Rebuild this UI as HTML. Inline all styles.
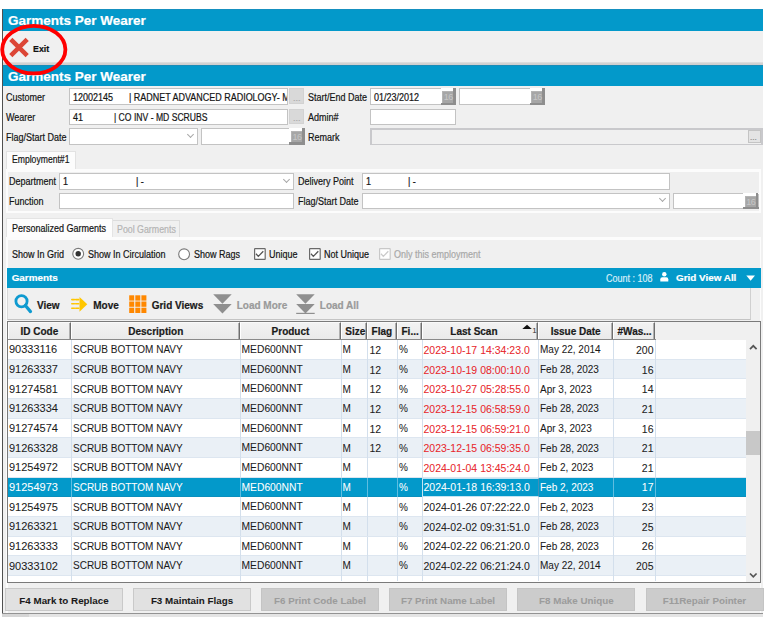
<!DOCTYPE html>
<html><head><meta charset="utf-8"><style>
*{box-sizing:border-box;margin:0;padding:0}
html,body{width:764px;height:620px;overflow:hidden;background:#fff}
body{position:relative;font-family:"Liberation Sans",sans-serif;font-size:10px;color:#141414}
.a{position:absolute}
.t{position:absolute;white-space:nowrap;line-height:1;transform-origin:0 0;-webkit-text-stroke:0.2px currentColor}
.b{font-weight:bold}
.in{position:absolute;background:#fff;border:1px solid #c3c3c3}
.dots{position:absolute;background:#d9d9d9;border:1px solid #d2d2d2}
.cal{position:absolute;background:#a2a2a2;border-top:1px solid #cfcfcf;border-left:1px solid #cfcfcf;border-right:1px solid #6e6e6e;border-bottom:1px solid #6e6e6e;color:#c9c9c9;font-size:9.5px;line-height:13px;text-align:center}
.chev{position:absolute;width:5px;height:5px;border-right:1px solid #a8a8a8;border-bottom:1px solid #a8a8a8;transform:rotate(45deg)}
.btn{position:absolute;background:#e1e1e1;border:1px solid #c9c9c9;top:588px;height:23px;width:118px}
.btn.d{background:#cccccc;border-color:#c4c4c4}
.hc{position:absolute;top:321px;height:18px;background:linear-gradient(#f2f2f2,#eaeaea);border-left:1px solid #fff;border-right:1px solid #6e6e6e;box-shadow:inset -1px 0 #b0b0b0}
</style></head><body>
<div class="a" style="left:3px;top:9px;width:760px;height:604px;background:#f0f0f0"></div>
<div class="a" style="left:2px;top:9px;width:1px;height:605px;background:#505050"></div>
<div class="a" style="left:2px;top:613px;width:761px;height:1px;background:#939393"></div>
<div class="a" style="left:2px;top:614px;width:761px;height:3px;background:#e4e4e4"></div>
<div class="a" style="left:2px;top:614px;width:27px;height:3px;background:#d6d6d6"></div>
<div class="a" style="left:3px;top:9px;width:760px;height:22px;background:#0399ca"></div>
<div class="a" style="left:3px;top:9px;width:760px;height:1px;background:#1590c0"></div>
<div class="t b" style="left:8px;top:14.07px;font-size:13.5px;color:#fff">Garments Per Wearer</div>
<div class="a" style="left:3px;top:62px;width:760px;height:3px;background:linear-gradient(#e4e4e4,#d2d2d2 40%,#cfcfcf)"></div>
<svg class="a" style="left:8px;top:37px" width="22" height="21" viewBox="0 0 22 21"><path d="M2.8 2.3 L19.2 18.7 M19.2 2.3 L2.8 18.7" stroke="#dc4636" stroke-width="4.5"/></svg>
<div class="t b" style="left:32.5px;top:43.70px;font-size:9.8px;color:#111;transform:scaleX(0.9)">Exit</div>
<div class="a" style="left:3px;top:65px;width:760px;height:21px;background:#0399ca"></div>
<div class="a" style="left:3px;top:65px;width:760px;height:1px;background:#1a8cb8"></div>
<div class="t b" style="left:8px;top:69.77px;font-size:13.5px;color:#fff">Garments Per Wearer</div>
<div class="t" style="left:5.5px;top:92.93px;font-size:10px;transform:scaleX(0.9)">Customer</div>
<div class="t" style="left:5.5px;top:113.13px;font-size:10px;transform:scaleX(0.9)">Wearer</div>
<div class="t" style="left:5.5px;top:133.13px;font-size:10px;transform:scaleX(0.9)">Flag/Start Date</div>
<div class="in" style="left:69px;top:88px;width:219px;height:17px"></div>
<div class="t" style="left:73px;top:92.93px;font-size:10px;transform:scaleX(0.9)">12002145</div>
<div class="a" style="left:0;top:0;width:287px;height:110px;overflow:hidden"><div class="t" style="left:129px;top:92.93px;font-size:10px;transform:scaleX(0.897)">| RADNET ADVANCED RADIOLOGY- M</div>
</div><div class="dots" style="left:289px;top:88px;width:15px;height:16px"></div>
<div class="t" style="left:293px;top:94.38px;font-size:9px;color:#a8a8a8">...</div>
<div class="in" style="left:69px;top:108.5px;width:219px;height:16.5px"></div>
<div class="t" style="left:73px;top:113.13px;font-size:10px;transform:scaleX(0.9)">41</div>
<div class="t" style="left:114px;top:113.13px;font-size:10px;transform:scaleX(0.86)">| CO INV - MD SCRUBS</div>
<div class="dots" style="left:289px;top:109px;width:15px;height:15px"></div>
<div class="t" style="left:293px;top:114.38px;font-size:9px;color:#a8a8a8">...</div>
<div class="in" style="left:69px;top:128px;width:129px;height:17px"></div>
<div class="chev" style="left:187.5px;top:132px"></div>
<div class="in" style="left:201px;top:128px;width:104px;height:17px"></div>
<div class="a" style="left:289.1px;top:128px;width:15.5px;height:1px;background:#fff"></div>
<div class="a" style="left:301.90000000000003px;top:128.2px;width:2.6999999999999886px;height:16.80000000000001px;background:#8e8e8e"></div>
<div class="a" style="left:289.1px;top:142.2px;width:15.5px;height:2.8000000000000114px;background:#8e8e8e"></div>
<div class="a" style="left:290.9px;top:130.5px;width:11px;height:11.7px;background:#a6a6a6;border-top:1px solid #b4b4b4;border-left:1px solid #b4b4b4;color:#c6c6c6;font-size:9px;line-height:10.7px;text-align:center;letter-spacing:-0.5px">16</div>
<div class="t" style="left:308px;top:92.93px;font-size:10px;transform:scaleX(0.9)">Start/End Date</div>
<div class="t" style="left:308px;top:113.13px;font-size:10px;transform:scaleX(0.9)">Admin#</div>
<div class="t" style="left:308px;top:133.13px;font-size:10px;transform:scaleX(0.9)">Remark</div>
<div class="in" style="left:370px;top:88px;width:86px;height:17px"></div>
<div class="t" style="left:374px;top:92.93px;font-size:10px;transform:scaleX(0.9)">01/23/2012</div>
<div class="a" style="left:440.5px;top:88px;width:15.5px;height:1px;background:#fff"></div>
<div class="a" style="left:453.3px;top:88.2px;width:2.6999999999999886px;height:17.099999999999994px;background:#8e8e8e"></div>
<div class="a" style="left:440.5px;top:102.5px;width:15.5px;height:2.799999999999997px;background:#8e8e8e"></div>
<div class="a" style="left:442.3px;top:90.5px;width:11px;height:12.0px;background:#a6a6a6;border-top:1px solid #b4b4b4;border-left:1px solid #b4b4b4;color:#c6c6c6;font-size:9px;line-height:11.0px;text-align:center;letter-spacing:-0.5px">16</div>
<div class="in" style="left:459px;top:88px;width:86px;height:17px"></div>
<div class="a" style="left:529.5px;top:88px;width:15.5px;height:1px;background:#fff"></div>
<div class="a" style="left:542.3px;top:88.2px;width:2.7000000000000455px;height:17.099999999999994px;background:#8e8e8e"></div>
<div class="a" style="left:529.5px;top:102.5px;width:15.5px;height:2.799999999999997px;background:#8e8e8e"></div>
<div class="a" style="left:531.3px;top:90.5px;width:11px;height:12.0px;background:#a6a6a6;border-top:1px solid #b4b4b4;border-left:1px solid #b4b4b4;color:#c6c6c6;font-size:9px;line-height:11.0px;text-align:center;letter-spacing:-0.5px">16</div>
<div class="in" style="left:370px;top:108.5px;width:86px;height:16.5px"></div>
<div class="a" style="left:370px;top:128px;width:393px;height:17px;background:#f0f0f0;border:2px solid #c9c9cc;border-bottom-width:1px"></div>
<div class="a" style="left:748px;top:130px;width:13px;height:13px;background:#e4e4e4;border:1px solid #c4c4c4"></div>
<div class="t" style="left:750px;top:134.23px;font-size:8px;color:#888">...</div>
<div class="a" style="left:5.5px;top:168.5px;width:755.5px;height:44.0px;background:#efefef;border:2px solid #fcfcfc;border-top-width:3px"></div>
<div class="a" style="left:5.5px;top:150.5px;width:70.5px;height:18.5px;background:#fcfcfc;border:1px solid #e2e2e2;border-bottom:none"></div>
<div class="t" style="left:12.4px;top:154.41px;font-size:10.5px;transform:scaleX(0.82)">Employment#1</div>
<div class="t" style="left:9px;top:177.13px;font-size:10px;transform:scaleX(0.9)">Department</div>
<div class="t" style="left:9px;top:196.83px;font-size:10px;transform:scaleX(0.9)">Function</div>
<div class="in" style="left:59px;top:173px;width:235px;height:16.5px"></div>
<div class="t" style="left:63px;top:177.13px;font-size:10px;transform:scaleX(0.9)">1</div>
<div class="t" style="left:136px;top:177.13px;font-size:10px;transform:scaleX(0.9)">| -</div>
<div class="chev" style="left:284.3px;top:176.5px"></div>
<div class="in" style="left:59px;top:193px;width:235px;height:16px"></div>
<div class="t" style="left:298px;top:177.13px;font-size:10px;transform:scaleX(0.9)">Delivery Point</div>
<div class="t" style="left:298px;top:196.83px;font-size:10px;transform:scaleX(0.9)">Flag/Start Date</div>
<div class="in" style="left:362px;top:173px;width:308px;height:16.5px"></div>
<div class="t" style="left:366px;top:177.13px;font-size:10px;transform:scaleX(0.9)">1</div>
<div class="t" style="left:408px;top:177.13px;font-size:10px;transform:scaleX(0.9)">| -</div>
<div class="in" style="left:362px;top:193px;width:308px;height:16px"></div>
<div class="chev" style="left:659.7px;top:196px"></div>
<div class="in" style="left:673px;top:193px;width:86px;height:16px"></div>
<div class="a" style="left:743.0px;top:193px;width:15.5px;height:1px;background:#fff"></div>
<div class="a" style="left:755.8px;top:193.2px;width:2.7000000000000455px;height:16.30000000000001px;background:#8e8e8e"></div>
<div class="a" style="left:743.0px;top:206.7px;width:15.5px;height:2.8000000000000114px;background:#8e8e8e"></div>
<div class="a" style="left:744.8px;top:195.5px;width:11px;height:11.2px;background:#a6a6a6;border-top:1px solid #b4b4b4;border-left:1px solid #b4b4b4;color:#c6c6c6;font-size:9px;line-height:10.2px;text-align:center;letter-spacing:-0.5px">16</div>
<div class="a" style="left:5.5px;top:236.5px;width:755.5px;height:376.5px;background:#f0f0f0;border-left:2px solid #fcfcfc;border-right:1px solid #fcfcfc;border-top:3px solid #fcfcfc"></div>
<div class="a" style="left:5.5px;top:218.3px;width:107.0px;height:18.69999999999999px;background:#fdfdfd;border:1px solid #e4e4e4;border-bottom:none"></div>
<div class="t" style="left:11.8px;top:223.94px;font-size:10px;transform:scaleX(0.9)">Personalized Garments</div>
<div class="a" style="left:112.5px;top:220px;width:67.1px;height:16.5px;background:#f0f0f0;border:1px solid #dcdcdc;border-bottom:none;border-left:none"></div>
<div class="t" style="left:116.5px;top:223.71px;font-size:10.5px;color:#b4b4b4;transform:scaleX(0.84)">Pool Garments</div>
<div class="t" style="left:11.8px;top:250.13px;font-size:10px;transform:scaleX(0.9)">Show In Grid</div>
<svg class="a" style="left:71px;top:247px" width="14" height="14"><circle cx="7.2" cy="6.8" r="5.4" fill="#fff" stroke="#7a7a7a" stroke-width="1.1"/><circle cx="7.2" cy="6.8" r="2.7" fill="#333"/></svg>
<div class="t" style="left:87.7px;top:250.13px;font-size:10px;transform:scaleX(0.9)">Show In Circulation</div>
<svg class="a" style="left:177px;top:247px" width="14" height="14"><circle cx="7.1" cy="7.3" r="5.4" fill="#fff" stroke="#7a7a7a" stroke-width="1.1"/></svg>
<div class="t" style="left:193.6px;top:250.13px;font-size:10px;transform:scaleX(0.9)">Show Rags</div>
<svg class="a" style="left:254px;top:248px" width="12" height="12"><rect x="0.6" y="0.6" width="10.6" height="10.8" rx="0.5" fill="#fff" stroke="#6a6a6a" stroke-width="1.2"/><path d="M2 5.8 L4.3 8.4 L9.3 3.2" fill="none" stroke="#555" stroke-width="1.3"/></svg>
<div class="t" style="left:269px;top:250.13px;font-size:10px;transform:scaleX(0.9)">Unique</div>
<svg class="a" style="left:309px;top:248px" width="12" height="12"><rect x="0.6" y="0.6" width="10.6" height="10.8" rx="0.5" fill="#fff" stroke="#6a6a6a" stroke-width="1.2"/><path d="M2 5.8 L4.3 8.4 L9.3 3.2" fill="none" stroke="#555" stroke-width="1.3"/></svg>
<div class="t" style="left:324px;top:250.13px;font-size:10px;transform:scaleX(0.9)">Not Unique</div>
<svg class="a" style="left:379px;top:248px" width="12" height="12"><rect x="0.6" y="0.6" width="10.6" height="10.8" rx="0.5" fill="#fff" stroke="#c8c8c8" stroke-width="1.2"/><path d="M2 5.8 L4.3 8.4 L9.3 3.2" fill="none" stroke="#cbcbcb" stroke-width="1.3"/></svg>
<div class="t" style="left:394px;top:250.13px;font-size:10px;color:#a8a8a8;transform:scaleX(0.9)">Only this employment</div>
<div class="a" style="left:7px;top:268px;width:753.5px;height:20px;background:#0399ca"></div>
<div class="t b" style="left:11.7px;top:273.02px;font-size:9.9px;color:#fff">Garments</div>
<div class="t" style="left:606px;top:273.54px;font-size:10px;color:#d8eef8;transform:scaleX(0.9)">Count : 108</div>
<svg class="a" style="left:660px;top:272px" width="9" height="10" viewBox="0 0 9 10"><circle cx="4.3" cy="2.3" r="2.2" fill="#fff"/><path d="M0.3 9.6 L0.3 7.2 Q0.3 5.2 2.3 5.2 L6.3 5.2 Q8.3 5.2 8.3 7.2 L8.3 9.6 Z" fill="#fff"/></svg>
<div class="t b" style="left:676px;top:273.02px;font-size:9.9px;color:#fff">Grid View All</div>
<svg class="a" style="left:746px;top:275px" width="10" height="7"><path d="M0.3 0.6 L9 0.6 L4.65 5.8 Z" fill="#fff"/></svg>
<div class="a" style="left:7px;top:288px;width:744px;height:32px;background:#f0f0f0;border-left:1px solid #d8d8d8;border-right:1px solid #d0d0d0;border-bottom:1px solid #c4c4c4"></div>
<svg class="a" style="left:13px;top:294px" width="20" height="21" viewBox="0 0 20 21"><circle cx="8.5" cy="7.2" r="5.6" fill="none" stroke="#0e9ad0" stroke-width="2.8"/><path d="M12.4 11.5 L17.5 17.6" stroke="#0e9ad0" stroke-width="3.2" stroke-linecap="round"/></svg>
<div class="t b" style="left:37px;top:300.74px;font-size:10px;color:#1a1a1a">View</div>
<svg class="a" style="left:71px;top:296px" width="18" height="17" viewBox="0 0 18 17"><path d="M0.8 3.6h2.6M4.7 3.6h3M0.8 7.8h2.6M4.7 7.8h3M0.8 12.3h2.6M4.7 12.3h3" stroke="#ffc600" stroke-width="1.6" stroke-linecap="round"/><path d="M8.5 1 L16.3 8.3 L8.5 15.8 Z" fill="#ffc600"/></svg>
<div class="t b" style="left:93.2px;top:300.74px;font-size:10px;color:#1a1a1a">Move</div>
<svg class="a" style="left:129px;top:295px" width="18" height="19" viewBox="0 0 18 19"><rect x="0.2" y="0.3" width="5" height="5.3" fill="#ff8800"/><rect x="6.3" y="0.3" width="5" height="5.3" fill="#ff8800"/><rect x="12.4" y="0.3" width="5" height="5.3" fill="#ff8800"/><rect x="0.2" y="6.5" width="5" height="5.3" fill="#ff8800"/><rect x="6.3" y="6.5" width="5" height="5.3" fill="#ff8800"/><rect x="12.4" y="6.5" width="5" height="5.3" fill="#ff8800"/><rect x="0.2" y="12.7" width="5" height="5.3" fill="#ff8800"/><rect x="6.3" y="12.7" width="5" height="5.3" fill="#ff8800"/><rect x="12.4" y="12.7" width="5" height="5.3" fill="#ff8800"/></svg>
<div class="t b" style="left:151.7px;top:300.74px;font-size:10px;color:#1a1a1a">Grid Views</div>
<svg class="a" style="left:213.2px;top:294px" width="20" height="20" viewBox="0 0 20 20"><path d="M0.2 0.3 L18.7 0.3 L9.45 9.7 Z" fill="#8f8f8f"/><path d="M0.2 10 L18.7 10 L9.45 19.4 Z" fill="#8f8f8f"/></svg>
<div class="t b" style="left:236.7px;top:300.74px;font-size:10px;color:#9a9a9a">Load More</div>
<svg class="a" style="left:296.1px;top:294px" width="20" height="20" viewBox="0 0 20 20"><path d="M0.2 0.3 L18.7 0.3 L9.45 9.7 Z" fill="#8f8f8f"/><path d="M0.2 10 L18.7 10 L9.45 19.4 Z" fill="#8f8f8f"/><rect x="0.2" y="18.8" width="18.5" height="1.3" fill="#8f8f8f"/></svg>
<div class="t b" style="left:319.8px;top:300.74px;font-size:10px;color:#9a9a9a">Load All</div>
<div class="a" style="left:7px;top:321px;width:753.5px;height:261.5px;background:#fff;border:1px solid #7a7a7a"></div>
<div class="a" style="left:8px;top:322px;width:751.5px;height:17.5px;background:#f0f0f0"></div>
<div class="hc" style="left:7.5px;width:63.8px;top:322px;height:17px;border-top:1px solid #fafafa"></div>
<div class="t b" style="left:7.5px;width:63.8px;text-align:center;top:326.54px;font-size:10px;color:#1a1a1a">ID Code</div>
<div class="hc" style="left:71.3px;width:168.9px;top:322px;height:17px;border-top:1px solid #fafafa"></div>
<div class="t b" style="left:71.3px;width:168.9px;text-align:center;top:326.54px;font-size:10px;color:#1a1a1a">Description</div>
<div class="hc" style="left:240.2px;width:100.6px;top:322px;height:17px;border-top:1px solid #fafafa"></div>
<div class="t b" style="left:240.2px;width:100.6px;text-align:center;top:326.54px;font-size:10px;color:#1a1a1a">Product</div>
<div class="hc" style="left:340.8px;width:26.3px;top:322px;height:17px;border-top:1px solid #fafafa"></div>
<div class="t b" style="left:345.3px;top:326.54px;font-size:10px;color:#1a1a1a">Size</div>
<div class="hc" style="left:367.1px;width:29.9px;top:322px;height:17px;border-top:1px solid #fafafa"></div>
<div class="t b" style="left:371.6px;top:326.54px;font-size:10px;color:#1a1a1a">Flag</div>
<div class="hc" style="left:397px;width:24.9px;top:322px;height:17px;border-top:1px solid #fafafa"></div>
<div class="t b" style="left:401.5px;top:326.54px;font-size:10px;color:#1a1a1a">Fi...</div>
<div class="hc" style="left:421.9px;width:116.4px;top:322px;height:17px;border-top:1px solid #fafafa"></div>
<div class="t b" style="left:450.3px;top:326.54px;font-size:10px;color:#1a1a1a">Last Scan</div>
<div class="hc" style="left:538.3px;width:74.7px;top:322px;height:17px;border-top:1px solid #fafafa"></div>
<div class="t b" style="left:538.3px;width:74.7px;text-align:center;top:326.54px;font-size:10px;color:#1a1a1a">Issue Date</div>
<div class="hc" style="left:613px;width:42.1px;top:322px;height:17px;border-top:1px solid #fafafa"></div>
<div class="t b" style="left:617.5px;top:326.54px;font-size:10px;color:#1a1a1a">#Was...</div>
<div class="a" style="left:8px;top:338.5px;width:647.5px;height:1.5px;background:#8a8a8a"></div>
<svg class="a" style="left:522px;top:324px" width="16" height="12" viewBox="0 0 16 12"><path d="M0.3 4.9 L5 0.8 L9.8 4.9 Z" fill="#111"/><text x="10.2" y="9.4" font-size="8" font-family="Liberation Sans" fill="#333">1</text></svg>
<div class="a" style="left:8px;top:340.0px;width:737.5px;height:19.649999999999977px;background:#ffffff"></div>
<div class="a" style="left:8px;top:358.65px;width:737.5px;height:1.0px;background:#dde6f0"></div>
<div class="a" style="left:71.3px;top:340.0px;width:1.0px;height:19.649999999999977px;background:#d3dfec"></div>
<div class="a" style="left:240.2px;top:340.0px;width:1.0px;height:19.649999999999977px;background:#d3dfec"></div>
<div class="a" style="left:340.8px;top:340.0px;width:1.0px;height:19.649999999999977px;background:#d3dfec"></div>
<div class="a" style="left:367.1px;top:340.0px;width:1.0px;height:19.649999999999977px;background:#d3dfec"></div>
<div class="a" style="left:397px;top:340.0px;width:1px;height:19.649999999999977px;background:#d3dfec"></div>
<div class="a" style="left:421.9px;top:340.0px;width:1.0px;height:19.649999999999977px;background:#d3dfec"></div>
<div class="a" style="left:538.3px;top:340.0px;width:1.0px;height:19.649999999999977px;background:#d3dfec"></div>
<div class="a" style="left:613px;top:340.0px;width:1px;height:19.649999999999977px;background:#d3dfec"></div>
<div class="a" style="left:655.1px;top:340.0px;width:1.0px;height:19.649999999999977px;background:#d3dfec"></div>
<div class="t" style="left:9px;top:344.49px;font-size:11px;color:#1a1a1a;-webkit-text-stroke:0.05px currentColor">90333116</div>
<div class="t" style="left:73px;top:345.34px;font-size:10px;color:#1a1a1a;-webkit-text-stroke:0.05px currentColor">SCRUB BOTTOM NAVY</div>
<div class="t" style="left:241.5px;top:345.08px;font-size:10.3px;color:#1a1a1a;-webkit-text-stroke:0.05px currentColor">MED600NNT</div>
<div class="t" style="left:342.5px;top:345.34px;font-size:10px;color:#1a1a1a;-webkit-text-stroke:0.05px currentColor">M</div>
<div class="t" style="left:369.5px;top:344.91px;font-size:10.5px;color:#1a1a1a;-webkit-text-stroke:0.05px currentColor">12</div>
<div class="t" style="left:399px;top:345.34px;font-size:10px;color:#1a1a1a;-webkit-text-stroke:0.05px currentColor">%</div>
<div class="t" style="left:423.5px;top:344.91px;font-size:10.5px;color:#e8262b;-webkit-text-stroke:0.05px currentColor">2023-10-17 14:34:23.0</div>
<div class="t" style="left:540px;top:345.34px;font-size:10px;color:#1a1a1a;-webkit-text-stroke:0.05px currentColor">May 22, 2014</div>
<div class="t" style="left:613px;width:40.5px;text-align:right;top:344.91px;font-size:10.5px;color:#1a1a1a;-webkit-text-stroke:0.05px currentColor">200</div>
<div class="a" style="left:8px;top:359.65px;width:737.5px;height:19.650000000000034px;background:#eaf0f6"></div>
<div class="a" style="left:8px;top:378.3px;width:737.5px;height:1.0px;background:#dde6f0"></div>
<div class="a" style="left:71.3px;top:359.65px;width:1.0px;height:19.650000000000034px;background:#d3dfec"></div>
<div class="a" style="left:240.2px;top:359.65px;width:1.0px;height:19.650000000000034px;background:#d3dfec"></div>
<div class="a" style="left:340.8px;top:359.65px;width:1.0px;height:19.650000000000034px;background:#d3dfec"></div>
<div class="a" style="left:367.1px;top:359.65px;width:1.0px;height:19.650000000000034px;background:#d3dfec"></div>
<div class="a" style="left:397px;top:359.65px;width:1px;height:19.650000000000034px;background:#d3dfec"></div>
<div class="a" style="left:421.9px;top:359.65px;width:1.0px;height:19.650000000000034px;background:#d3dfec"></div>
<div class="a" style="left:538.3px;top:359.65px;width:1.0px;height:19.650000000000034px;background:#d3dfec"></div>
<div class="a" style="left:613px;top:359.65px;width:1px;height:19.650000000000034px;background:#d3dfec"></div>
<div class="a" style="left:655.1px;top:359.65px;width:1.0px;height:19.650000000000034px;background:#d3dfec"></div>
<div class="t" style="left:9px;top:364.14px;font-size:11px;color:#1a1a1a;-webkit-text-stroke:0.05px currentColor">91263337</div>
<div class="t" style="left:73px;top:364.99px;font-size:10px;color:#1a1a1a;-webkit-text-stroke:0.05px currentColor">SCRUB BOTTOM NAVY</div>
<div class="t" style="left:241.5px;top:364.73px;font-size:10.3px;color:#1a1a1a;-webkit-text-stroke:0.05px currentColor">MED600NNT</div>
<div class="t" style="left:342.5px;top:364.99px;font-size:10px;color:#1a1a1a;-webkit-text-stroke:0.05px currentColor">M</div>
<div class="t" style="left:369.5px;top:364.56px;font-size:10.5px;color:#1a1a1a;-webkit-text-stroke:0.05px currentColor">12</div>
<div class="t" style="left:399px;top:364.99px;font-size:10px;color:#1a1a1a;-webkit-text-stroke:0.05px currentColor">%</div>
<div class="t" style="left:423.5px;top:364.56px;font-size:10.5px;color:#e8262b;-webkit-text-stroke:0.05px currentColor">2023-10-19 08:00:10.0</div>
<div class="t" style="left:540px;top:364.99px;font-size:10px;color:#1a1a1a;-webkit-text-stroke:0.05px currentColor">Feb 28, 2023</div>
<div class="t" style="left:613px;width:40.5px;text-align:right;top:364.56px;font-size:10.5px;color:#1a1a1a;-webkit-text-stroke:0.05px currentColor">16</div>
<div class="a" style="left:8px;top:379.3px;width:737.5px;height:19.649999999999977px;background:#ffffff"></div>
<div class="a" style="left:8px;top:397.95px;width:737.5px;height:1.0px;background:#dde6f0"></div>
<div class="a" style="left:71.3px;top:379.3px;width:1.0px;height:19.649999999999977px;background:#d3dfec"></div>
<div class="a" style="left:240.2px;top:379.3px;width:1.0px;height:19.649999999999977px;background:#d3dfec"></div>
<div class="a" style="left:340.8px;top:379.3px;width:1.0px;height:19.649999999999977px;background:#d3dfec"></div>
<div class="a" style="left:367.1px;top:379.3px;width:1.0px;height:19.649999999999977px;background:#d3dfec"></div>
<div class="a" style="left:397px;top:379.3px;width:1px;height:19.649999999999977px;background:#d3dfec"></div>
<div class="a" style="left:421.9px;top:379.3px;width:1.0px;height:19.649999999999977px;background:#d3dfec"></div>
<div class="a" style="left:538.3px;top:379.3px;width:1.0px;height:19.649999999999977px;background:#d3dfec"></div>
<div class="a" style="left:613px;top:379.3px;width:1px;height:19.649999999999977px;background:#d3dfec"></div>
<div class="a" style="left:655.1px;top:379.3px;width:1.0px;height:19.649999999999977px;background:#d3dfec"></div>
<div class="t" style="left:9px;top:383.79px;font-size:11px;color:#1a1a1a;-webkit-text-stroke:0.05px currentColor">91274581</div>
<div class="t" style="left:73px;top:384.64px;font-size:10px;color:#1a1a1a;-webkit-text-stroke:0.05px currentColor">SCRUB BOTTOM NAVY</div>
<div class="t" style="left:241.5px;top:384.38px;font-size:10.3px;color:#1a1a1a;-webkit-text-stroke:0.05px currentColor">MED600NNT</div>
<div class="t" style="left:342.5px;top:384.64px;font-size:10px;color:#1a1a1a;-webkit-text-stroke:0.05px currentColor">M</div>
<div class="t" style="left:369.5px;top:384.21px;font-size:10.5px;color:#1a1a1a;-webkit-text-stroke:0.05px currentColor">12</div>
<div class="t" style="left:399px;top:384.64px;font-size:10px;color:#1a1a1a;-webkit-text-stroke:0.05px currentColor">%</div>
<div class="t" style="left:423.5px;top:384.21px;font-size:10.5px;color:#e8262b;-webkit-text-stroke:0.05px currentColor">2023-10-27 05:28:55.0</div>
<div class="t" style="left:540px;top:384.64px;font-size:10px;color:#1a1a1a;-webkit-text-stroke:0.05px currentColor">Apr 3, 2023</div>
<div class="t" style="left:613px;width:40.5px;text-align:right;top:384.21px;font-size:10.5px;color:#1a1a1a;-webkit-text-stroke:0.05px currentColor">14</div>
<div class="a" style="left:8px;top:398.95px;width:737.5px;height:19.650000000000034px;background:#eaf0f6"></div>
<div class="a" style="left:8px;top:417.6px;width:737.5px;height:1.0px;background:#dde6f0"></div>
<div class="a" style="left:71.3px;top:398.95px;width:1.0px;height:19.650000000000034px;background:#d3dfec"></div>
<div class="a" style="left:240.2px;top:398.95px;width:1.0px;height:19.650000000000034px;background:#d3dfec"></div>
<div class="a" style="left:340.8px;top:398.95px;width:1.0px;height:19.650000000000034px;background:#d3dfec"></div>
<div class="a" style="left:367.1px;top:398.95px;width:1.0px;height:19.650000000000034px;background:#d3dfec"></div>
<div class="a" style="left:397px;top:398.95px;width:1px;height:19.650000000000034px;background:#d3dfec"></div>
<div class="a" style="left:421.9px;top:398.95px;width:1.0px;height:19.650000000000034px;background:#d3dfec"></div>
<div class="a" style="left:538.3px;top:398.95px;width:1.0px;height:19.650000000000034px;background:#d3dfec"></div>
<div class="a" style="left:613px;top:398.95px;width:1px;height:19.650000000000034px;background:#d3dfec"></div>
<div class="a" style="left:655.1px;top:398.95px;width:1.0px;height:19.650000000000034px;background:#d3dfec"></div>
<div class="t" style="left:9px;top:403.44px;font-size:11px;color:#1a1a1a;-webkit-text-stroke:0.05px currentColor">91263334</div>
<div class="t" style="left:73px;top:404.29px;font-size:10px;color:#1a1a1a;-webkit-text-stroke:0.05px currentColor">SCRUB BOTTOM NAVY</div>
<div class="t" style="left:241.5px;top:404.03px;font-size:10.3px;color:#1a1a1a;-webkit-text-stroke:0.05px currentColor">MED600NNT</div>
<div class="t" style="left:342.5px;top:404.29px;font-size:10px;color:#1a1a1a;-webkit-text-stroke:0.05px currentColor">M</div>
<div class="t" style="left:369.5px;top:403.86px;font-size:10.5px;color:#1a1a1a;-webkit-text-stroke:0.05px currentColor">12</div>
<div class="t" style="left:399px;top:404.29px;font-size:10px;color:#1a1a1a;-webkit-text-stroke:0.05px currentColor">%</div>
<div class="t" style="left:423.5px;top:403.86px;font-size:10.5px;color:#e8262b;-webkit-text-stroke:0.05px currentColor">2023-12-15 06:58:59.0</div>
<div class="t" style="left:540px;top:404.29px;font-size:10px;color:#1a1a1a;-webkit-text-stroke:0.05px currentColor">Feb 28, 2023</div>
<div class="t" style="left:613px;width:40.5px;text-align:right;top:403.86px;font-size:10.5px;color:#1a1a1a;-webkit-text-stroke:0.05px currentColor">21</div>
<div class="a" style="left:8px;top:418.6px;width:737.5px;height:19.649999999999977px;background:#ffffff"></div>
<div class="a" style="left:8px;top:437.25px;width:737.5px;height:1.0px;background:#dde6f0"></div>
<div class="a" style="left:71.3px;top:418.6px;width:1.0px;height:19.649999999999977px;background:#d3dfec"></div>
<div class="a" style="left:240.2px;top:418.6px;width:1.0px;height:19.649999999999977px;background:#d3dfec"></div>
<div class="a" style="left:340.8px;top:418.6px;width:1.0px;height:19.649999999999977px;background:#d3dfec"></div>
<div class="a" style="left:367.1px;top:418.6px;width:1.0px;height:19.649999999999977px;background:#d3dfec"></div>
<div class="a" style="left:397px;top:418.6px;width:1px;height:19.649999999999977px;background:#d3dfec"></div>
<div class="a" style="left:421.9px;top:418.6px;width:1.0px;height:19.649999999999977px;background:#d3dfec"></div>
<div class="a" style="left:538.3px;top:418.6px;width:1.0px;height:19.649999999999977px;background:#d3dfec"></div>
<div class="a" style="left:613px;top:418.6px;width:1px;height:19.649999999999977px;background:#d3dfec"></div>
<div class="a" style="left:655.1px;top:418.6px;width:1.0px;height:19.649999999999977px;background:#d3dfec"></div>
<div class="t" style="left:9px;top:423.09px;font-size:11px;color:#1a1a1a;-webkit-text-stroke:0.05px currentColor">91274574</div>
<div class="t" style="left:73px;top:423.94px;font-size:10px;color:#1a1a1a;-webkit-text-stroke:0.05px currentColor">SCRUB BOTTOM NAVY</div>
<div class="t" style="left:241.5px;top:423.68px;font-size:10.3px;color:#1a1a1a;-webkit-text-stroke:0.05px currentColor">MED600NNT</div>
<div class="t" style="left:342.5px;top:423.94px;font-size:10px;color:#1a1a1a;-webkit-text-stroke:0.05px currentColor">M</div>
<div class="t" style="left:369.5px;top:423.51px;font-size:10.5px;color:#1a1a1a;-webkit-text-stroke:0.05px currentColor">12</div>
<div class="t" style="left:399px;top:423.94px;font-size:10px;color:#1a1a1a;-webkit-text-stroke:0.05px currentColor">%</div>
<div class="t" style="left:423.5px;top:423.51px;font-size:10.5px;color:#e8262b;-webkit-text-stroke:0.05px currentColor">2023-12-15 06:59:21.0</div>
<div class="t" style="left:540px;top:423.94px;font-size:10px;color:#1a1a1a;-webkit-text-stroke:0.05px currentColor">Apr 3, 2023</div>
<div class="t" style="left:613px;width:40.5px;text-align:right;top:423.51px;font-size:10.5px;color:#1a1a1a;-webkit-text-stroke:0.05px currentColor">16</div>
<div class="a" style="left:8px;top:438.25px;width:737.5px;height:19.649999999999977px;background:#eaf0f6"></div>
<div class="a" style="left:8px;top:456.9px;width:737.5px;height:1.0px;background:#dde6f0"></div>
<div class="a" style="left:71.3px;top:438.25px;width:1.0px;height:19.649999999999977px;background:#d3dfec"></div>
<div class="a" style="left:240.2px;top:438.25px;width:1.0px;height:19.649999999999977px;background:#d3dfec"></div>
<div class="a" style="left:340.8px;top:438.25px;width:1.0px;height:19.649999999999977px;background:#d3dfec"></div>
<div class="a" style="left:367.1px;top:438.25px;width:1.0px;height:19.649999999999977px;background:#d3dfec"></div>
<div class="a" style="left:397px;top:438.25px;width:1px;height:19.649999999999977px;background:#d3dfec"></div>
<div class="a" style="left:421.9px;top:438.25px;width:1.0px;height:19.649999999999977px;background:#d3dfec"></div>
<div class="a" style="left:538.3px;top:438.25px;width:1.0px;height:19.649999999999977px;background:#d3dfec"></div>
<div class="a" style="left:613px;top:438.25px;width:1px;height:19.649999999999977px;background:#d3dfec"></div>
<div class="a" style="left:655.1px;top:438.25px;width:1.0px;height:19.649999999999977px;background:#d3dfec"></div>
<div class="t" style="left:9px;top:442.74px;font-size:11px;color:#1a1a1a;-webkit-text-stroke:0.05px currentColor">91263328</div>
<div class="t" style="left:73px;top:443.59px;font-size:10px;color:#1a1a1a;-webkit-text-stroke:0.05px currentColor">SCRUB BOTTOM NAVY</div>
<div class="t" style="left:241.5px;top:443.33px;font-size:10.3px;color:#1a1a1a;-webkit-text-stroke:0.05px currentColor">MED600NNT</div>
<div class="t" style="left:342.5px;top:443.59px;font-size:10px;color:#1a1a1a;-webkit-text-stroke:0.05px currentColor">M</div>
<div class="t" style="left:369.5px;top:443.16px;font-size:10.5px;color:#1a1a1a;-webkit-text-stroke:0.05px currentColor">12</div>
<div class="t" style="left:399px;top:443.59px;font-size:10px;color:#1a1a1a;-webkit-text-stroke:0.05px currentColor">%</div>
<div class="t" style="left:423.5px;top:443.16px;font-size:10.5px;color:#e8262b;-webkit-text-stroke:0.05px currentColor">2023-12-15 06:59:35.0</div>
<div class="t" style="left:540px;top:443.59px;font-size:10px;color:#1a1a1a;-webkit-text-stroke:0.05px currentColor">Feb 28, 2023</div>
<div class="t" style="left:613px;width:40.5px;text-align:right;top:443.16px;font-size:10.5px;color:#1a1a1a;-webkit-text-stroke:0.05px currentColor">21</div>
<div class="a" style="left:8px;top:457.9px;width:737.5px;height:19.650000000000034px;background:#ffffff"></div>
<div class="a" style="left:8px;top:476.55px;width:737.5px;height:1.0px;background:#dde6f0"></div>
<div class="a" style="left:71.3px;top:457.9px;width:1.0px;height:19.650000000000034px;background:#d3dfec"></div>
<div class="a" style="left:240.2px;top:457.9px;width:1.0px;height:19.650000000000034px;background:#d3dfec"></div>
<div class="a" style="left:340.8px;top:457.9px;width:1.0px;height:19.650000000000034px;background:#d3dfec"></div>
<div class="a" style="left:367.1px;top:457.9px;width:1.0px;height:19.650000000000034px;background:#d3dfec"></div>
<div class="a" style="left:397px;top:457.9px;width:1px;height:19.650000000000034px;background:#d3dfec"></div>
<div class="a" style="left:421.9px;top:457.9px;width:1.0px;height:19.650000000000034px;background:#d3dfec"></div>
<div class="a" style="left:538.3px;top:457.9px;width:1.0px;height:19.650000000000034px;background:#d3dfec"></div>
<div class="a" style="left:613px;top:457.9px;width:1px;height:19.650000000000034px;background:#d3dfec"></div>
<div class="a" style="left:655.1px;top:457.9px;width:1.0px;height:19.650000000000034px;background:#d3dfec"></div>
<div class="t" style="left:9px;top:462.39px;font-size:11px;color:#1a1a1a;-webkit-text-stroke:0.05px currentColor">91254972</div>
<div class="t" style="left:73px;top:463.24px;font-size:10px;color:#1a1a1a;-webkit-text-stroke:0.05px currentColor">SCRUB BOTTOM NAVY</div>
<div class="t" style="left:241.5px;top:462.98px;font-size:10.3px;color:#1a1a1a;-webkit-text-stroke:0.05px currentColor">MED600NNT</div>
<div class="t" style="left:342.5px;top:463.24px;font-size:10px;color:#1a1a1a;-webkit-text-stroke:0.05px currentColor">M</div>
<div class="t" style="left:399px;top:463.24px;font-size:10px;color:#1a1a1a;-webkit-text-stroke:0.05px currentColor">%</div>
<div class="t" style="left:423.5px;top:462.81px;font-size:10.5px;color:#e8262b;-webkit-text-stroke:0.05px currentColor">2024-01-04 13:45:24.0</div>
<div class="t" style="left:540px;top:463.24px;font-size:10px;color:#1a1a1a;-webkit-text-stroke:0.05px currentColor">Feb 2, 2023</div>
<div class="t" style="left:613px;width:40.5px;text-align:right;top:462.81px;font-size:10.5px;color:#1a1a1a;-webkit-text-stroke:0.05px currentColor">21</div>
<div class="a" style="left:8px;top:477.55px;width:737.5px;height:19.649999999999977px;background:#0399ca"></div>
<div class="a" style="left:8px;top:496.2px;width:737.5px;height:1.0px;background:#0a8fbd"></div>
<div class="a" style="left:71.3px;top:477.55px;width:1.0px;height:19.649999999999977px;background:#5fbde0"></div>
<div class="a" style="left:240.2px;top:477.55px;width:1.0px;height:19.649999999999977px;background:#5fbde0"></div>
<div class="a" style="left:340.8px;top:477.55px;width:1.0px;height:19.649999999999977px;background:#5fbde0"></div>
<div class="a" style="left:367.1px;top:477.55px;width:1.0px;height:19.649999999999977px;background:#5fbde0"></div>
<div class="a" style="left:397px;top:477.55px;width:1px;height:19.649999999999977px;background:#5fbde0"></div>
<div class="a" style="left:421.9px;top:477.55px;width:1.0px;height:19.649999999999977px;background:#5fbde0"></div>
<div class="a" style="left:538.3px;top:477.55px;width:1.0px;height:19.649999999999977px;background:#5fbde0"></div>
<div class="a" style="left:613px;top:477.55px;width:1px;height:19.649999999999977px;background:#5fbde0"></div>
<div class="a" style="left:655.1px;top:477.55px;width:1.0px;height:19.649999999999977px;background:#5fbde0"></div>
<div class="t" style="left:9px;top:482.04px;font-size:11px;color:#fff;-webkit-text-stroke:0.05px currentColor">91254973</div>
<div class="t" style="left:73px;top:482.88px;font-size:10px;color:#fff;-webkit-text-stroke:0.05px currentColor">SCRUB BOTTOM NAVY</div>
<div class="t" style="left:241.5px;top:482.63px;font-size:10.3px;color:#fff;-webkit-text-stroke:0.05px currentColor">MED600NNT</div>
<div class="t" style="left:342.5px;top:482.88px;font-size:10px;color:#fff;-webkit-text-stroke:0.05px currentColor">M</div>
<div class="t" style="left:399px;top:482.88px;font-size:10px;color:#fff;-webkit-text-stroke:0.05px currentColor">%</div>
<div class="t" style="left:423.5px;top:482.46px;font-size:10.5px;color:#fff;-webkit-text-stroke:0.05px currentColor">2024-01-18 16:39:13.0</div>
<div class="t" style="left:540px;top:482.88px;font-size:10px;color:#fff;-webkit-text-stroke:0.05px currentColor">Feb 2, 2023</div>
<div class="t" style="left:613px;width:40.5px;text-align:right;top:482.46px;font-size:10.5px;color:#fff;-webkit-text-stroke:0.05px currentColor">17</div>
<div class="a" style="left:8px;top:497.2px;width:737.5px;height:19.650000000000034px;background:#ffffff"></div>
<div class="a" style="left:8px;top:515.85px;width:737.5px;height:1.0px;background:#dde6f0"></div>
<div class="a" style="left:71.3px;top:497.2px;width:1.0px;height:19.650000000000034px;background:#d3dfec"></div>
<div class="a" style="left:240.2px;top:497.2px;width:1.0px;height:19.650000000000034px;background:#d3dfec"></div>
<div class="a" style="left:340.8px;top:497.2px;width:1.0px;height:19.650000000000034px;background:#d3dfec"></div>
<div class="a" style="left:367.1px;top:497.2px;width:1.0px;height:19.650000000000034px;background:#d3dfec"></div>
<div class="a" style="left:397px;top:497.2px;width:1px;height:19.650000000000034px;background:#d3dfec"></div>
<div class="a" style="left:421.9px;top:497.2px;width:1.0px;height:19.650000000000034px;background:#d3dfec"></div>
<div class="a" style="left:538.3px;top:497.2px;width:1.0px;height:19.650000000000034px;background:#d3dfec"></div>
<div class="a" style="left:613px;top:497.2px;width:1px;height:19.650000000000034px;background:#d3dfec"></div>
<div class="a" style="left:655.1px;top:497.2px;width:1.0px;height:19.650000000000034px;background:#d3dfec"></div>
<div class="t" style="left:9px;top:501.69px;font-size:11px;color:#1a1a1a;-webkit-text-stroke:0.05px currentColor">91254975</div>
<div class="t" style="left:73px;top:502.54px;font-size:10px;color:#1a1a1a;-webkit-text-stroke:0.05px currentColor">SCRUB BOTTOM NAVY</div>
<div class="t" style="left:241.5px;top:502.28px;font-size:10.3px;color:#1a1a1a;-webkit-text-stroke:0.05px currentColor">MED600NNT</div>
<div class="t" style="left:342.5px;top:502.54px;font-size:10px;color:#1a1a1a;-webkit-text-stroke:0.05px currentColor">M</div>
<div class="t" style="left:399px;top:502.54px;font-size:10px;color:#1a1a1a;-webkit-text-stroke:0.05px currentColor">%</div>
<div class="t" style="left:423.5px;top:502.11px;font-size:10.5px;color:#1a1a1a;-webkit-text-stroke:0.05px currentColor">2024-01-26 07:22:22.0</div>
<div class="t" style="left:540px;top:502.54px;font-size:10px;color:#1a1a1a;-webkit-text-stroke:0.05px currentColor">Feb 2, 2023</div>
<div class="t" style="left:613px;width:40.5px;text-align:right;top:502.11px;font-size:10.5px;color:#1a1a1a;-webkit-text-stroke:0.05px currentColor">23</div>
<div class="a" style="left:8px;top:516.85px;width:737.5px;height:19.649999999999977px;background:#eaf0f6"></div>
<div class="a" style="left:8px;top:535.5px;width:737.5px;height:1.0px;background:#dde6f0"></div>
<div class="a" style="left:71.3px;top:516.85px;width:1.0px;height:19.649999999999977px;background:#d3dfec"></div>
<div class="a" style="left:240.2px;top:516.85px;width:1.0px;height:19.649999999999977px;background:#d3dfec"></div>
<div class="a" style="left:340.8px;top:516.85px;width:1.0px;height:19.649999999999977px;background:#d3dfec"></div>
<div class="a" style="left:367.1px;top:516.85px;width:1.0px;height:19.649999999999977px;background:#d3dfec"></div>
<div class="a" style="left:397px;top:516.85px;width:1px;height:19.649999999999977px;background:#d3dfec"></div>
<div class="a" style="left:421.9px;top:516.85px;width:1.0px;height:19.649999999999977px;background:#d3dfec"></div>
<div class="a" style="left:538.3px;top:516.85px;width:1.0px;height:19.649999999999977px;background:#d3dfec"></div>
<div class="a" style="left:613px;top:516.85px;width:1px;height:19.649999999999977px;background:#d3dfec"></div>
<div class="a" style="left:655.1px;top:516.85px;width:1.0px;height:19.649999999999977px;background:#d3dfec"></div>
<div class="t" style="left:9px;top:521.34px;font-size:11px;color:#1a1a1a;-webkit-text-stroke:0.05px currentColor">91263321</div>
<div class="t" style="left:73px;top:522.18px;font-size:10px;color:#1a1a1a;-webkit-text-stroke:0.05px currentColor">SCRUB BOTTOM NAVY</div>
<div class="t" style="left:241.5px;top:521.93px;font-size:10.3px;color:#1a1a1a;-webkit-text-stroke:0.05px currentColor">MED600NNT</div>
<div class="t" style="left:342.5px;top:522.18px;font-size:10px;color:#1a1a1a;-webkit-text-stroke:0.05px currentColor">M</div>
<div class="t" style="left:399px;top:522.18px;font-size:10px;color:#1a1a1a;-webkit-text-stroke:0.05px currentColor">%</div>
<div class="t" style="left:423.5px;top:521.76px;font-size:10.5px;color:#1a1a1a;-webkit-text-stroke:0.05px currentColor">2024-02-02 09:31:51.0</div>
<div class="t" style="left:540px;top:522.18px;font-size:10px;color:#1a1a1a;-webkit-text-stroke:0.05px currentColor">Feb 28, 2023</div>
<div class="t" style="left:613px;width:40.5px;text-align:right;top:521.76px;font-size:10.5px;color:#1a1a1a;-webkit-text-stroke:0.05px currentColor">25</div>
<div class="a" style="left:8px;top:536.5px;width:737.5px;height:19.649999999999977px;background:#ffffff"></div>
<div class="a" style="left:8px;top:555.15px;width:737.5px;height:1.0px;background:#dde6f0"></div>
<div class="a" style="left:71.3px;top:536.5px;width:1.0px;height:19.649999999999977px;background:#d3dfec"></div>
<div class="a" style="left:240.2px;top:536.5px;width:1.0px;height:19.649999999999977px;background:#d3dfec"></div>
<div class="a" style="left:340.8px;top:536.5px;width:1.0px;height:19.649999999999977px;background:#d3dfec"></div>
<div class="a" style="left:367.1px;top:536.5px;width:1.0px;height:19.649999999999977px;background:#d3dfec"></div>
<div class="a" style="left:397px;top:536.5px;width:1px;height:19.649999999999977px;background:#d3dfec"></div>
<div class="a" style="left:421.9px;top:536.5px;width:1.0px;height:19.649999999999977px;background:#d3dfec"></div>
<div class="a" style="left:538.3px;top:536.5px;width:1.0px;height:19.649999999999977px;background:#d3dfec"></div>
<div class="a" style="left:613px;top:536.5px;width:1px;height:19.649999999999977px;background:#d3dfec"></div>
<div class="a" style="left:655.1px;top:536.5px;width:1.0px;height:19.649999999999977px;background:#d3dfec"></div>
<div class="t" style="left:9px;top:540.99px;font-size:11px;color:#1a1a1a;-webkit-text-stroke:0.05px currentColor">91263333</div>
<div class="t" style="left:73px;top:541.83px;font-size:10px;color:#1a1a1a;-webkit-text-stroke:0.05px currentColor">SCRUB BOTTOM NAVY</div>
<div class="t" style="left:241.5px;top:541.58px;font-size:10.3px;color:#1a1a1a;-webkit-text-stroke:0.05px currentColor">MED600NNT</div>
<div class="t" style="left:342.5px;top:541.83px;font-size:10px;color:#1a1a1a;-webkit-text-stroke:0.05px currentColor">M</div>
<div class="t" style="left:399px;top:541.83px;font-size:10px;color:#1a1a1a;-webkit-text-stroke:0.05px currentColor">%</div>
<div class="t" style="left:423.5px;top:541.41px;font-size:10.5px;color:#1a1a1a;-webkit-text-stroke:0.05px currentColor">2024-02-22 06:21:20.0</div>
<div class="t" style="left:540px;top:541.83px;font-size:10px;color:#1a1a1a;-webkit-text-stroke:0.05px currentColor">Feb 28, 2023</div>
<div class="t" style="left:613px;width:40.5px;text-align:right;top:541.41px;font-size:10.5px;color:#1a1a1a;-webkit-text-stroke:0.05px currentColor">26</div>
<div class="a" style="left:8px;top:556.15px;width:737.5px;height:19.649999999999977px;background:#eaf0f6"></div>
<div class="a" style="left:8px;top:574.8px;width:737.5px;height:1.0px;background:#dde6f0"></div>
<div class="a" style="left:71.3px;top:556.15px;width:1.0px;height:19.649999999999977px;background:#d3dfec"></div>
<div class="a" style="left:240.2px;top:556.15px;width:1.0px;height:19.649999999999977px;background:#d3dfec"></div>
<div class="a" style="left:340.8px;top:556.15px;width:1.0px;height:19.649999999999977px;background:#d3dfec"></div>
<div class="a" style="left:367.1px;top:556.15px;width:1.0px;height:19.649999999999977px;background:#d3dfec"></div>
<div class="a" style="left:397px;top:556.15px;width:1px;height:19.649999999999977px;background:#d3dfec"></div>
<div class="a" style="left:421.9px;top:556.15px;width:1.0px;height:19.649999999999977px;background:#d3dfec"></div>
<div class="a" style="left:538.3px;top:556.15px;width:1.0px;height:19.649999999999977px;background:#d3dfec"></div>
<div class="a" style="left:613px;top:556.15px;width:1px;height:19.649999999999977px;background:#d3dfec"></div>
<div class="a" style="left:655.1px;top:556.15px;width:1.0px;height:19.649999999999977px;background:#d3dfec"></div>
<div class="t" style="left:9px;top:560.64px;font-size:11px;color:#1a1a1a;-webkit-text-stroke:0.05px currentColor">90333102</div>
<div class="t" style="left:73px;top:561.48px;font-size:10px;color:#1a1a1a;-webkit-text-stroke:0.05px currentColor">SCRUB BOTTOM NAVY</div>
<div class="t" style="left:241.5px;top:561.23px;font-size:10.3px;color:#1a1a1a;-webkit-text-stroke:0.05px currentColor">MED600NNT</div>
<div class="t" style="left:342.5px;top:561.48px;font-size:10px;color:#1a1a1a;-webkit-text-stroke:0.05px currentColor">M</div>
<div class="t" style="left:399px;top:561.48px;font-size:10px;color:#1a1a1a;-webkit-text-stroke:0.05px currentColor">%</div>
<div class="t" style="left:423.5px;top:561.06px;font-size:10.5px;color:#1a1a1a;-webkit-text-stroke:0.05px currentColor">2024-02-22 06:21:24.0</div>
<div class="t" style="left:540px;top:561.48px;font-size:10px;color:#1a1a1a;-webkit-text-stroke:0.05px currentColor">May 22, 2014</div>
<div class="t" style="left:613px;width:40.5px;text-align:right;top:561.06px;font-size:10.5px;color:#1a1a1a;-webkit-text-stroke:0.05px currentColor">205</div>
<div class="a" style="left:8px;top:575.8px;width:737.5px;height:5.7000000000000455px;background:#ffffff"></div>
<div class="a" style="left:71.3px;top:575.8px;width:1.0px;height:5.7000000000000455px;background:#d3dfec"></div>
<div class="a" style="left:240.2px;top:575.8px;width:1.0px;height:5.7000000000000455px;background:#d3dfec"></div>
<div class="a" style="left:340.8px;top:575.8px;width:1.0px;height:5.7000000000000455px;background:#d3dfec"></div>
<div class="a" style="left:367.1px;top:575.8px;width:1.0px;height:5.7000000000000455px;background:#d3dfec"></div>
<div class="a" style="left:397px;top:575.8px;width:1px;height:5.7000000000000455px;background:#d3dfec"></div>
<div class="a" style="left:421.9px;top:575.8px;width:1.0px;height:5.7000000000000455px;background:#d3dfec"></div>
<div class="a" style="left:538.3px;top:575.8px;width:1.0px;height:5.7000000000000455px;background:#d3dfec"></div>
<div class="a" style="left:613px;top:575.8px;width:1px;height:5.7000000000000455px;background:#d3dfec"></div>
<div class="a" style="left:655.1px;top:575.8px;width:1.0px;height:5.7000000000000455px;background:#d3dfec"></div>
<div class="a" style="left:422px;top:477.55px;width:116.5px;height:19.649999999999977px;border:1px solid #c4e4f2;border-right-color:#3f8fb8"></div>
<div class="a" style="left:745.5px;top:340px;width:14.0px;height:241.5px;background:#f0f0f0"></div>
<div class="a" style="left:746px;top:431px;width:13.5px;height:24px;background:#c8c8c8"></div>
<svg class="a" style="left:748.5px;top:344px" width="9" height="7"><path d="M1 5.2 L4.3 1.8 L7.6 5.2" fill="none" stroke="#555" stroke-width="1.7"/></svg>
<svg class="a" style="left:748.5px;top:571.5px" width="9" height="7"><path d="M1 1.5 L4.3 4.9 L7.6 1.5" fill="none" stroke="#555" stroke-width="1.7"/></svg>
<div class="btn" style="left:5px"></div>
<div class="t b" style="left:5px;width:118px;text-align:center;top:596.00px;font-size:9.8px;-webkit-text-stroke:0.05px currentColor;color:#1a1a1a">F4 Mark to Replace</div>
<div class="btn" style="left:133px"></div>
<div class="t b" style="left:133px;width:118px;text-align:center;top:596.00px;font-size:9.8px;-webkit-text-stroke:0.05px currentColor;color:#1a1a1a">F3 Maintain Flags</div>
<div class="btn d" style="left:261px"></div>
<div class="t b" style="left:261px;width:118px;text-align:center;top:596.00px;font-size:9.8px;-webkit-text-stroke:0.05px currentColor;color:#9c9c9c">F6 Print Code Label</div>
<div class="btn d" style="left:389px"></div>
<div class="t b" style="left:389px;width:118px;text-align:center;top:596.00px;font-size:9.8px;-webkit-text-stroke:0.05px currentColor;color:#9c9c9c">F7 Print Name Label</div>
<div class="btn d" style="left:517.4px"></div>
<div class="t b" style="left:517.4px;width:118px;text-align:center;top:596.00px;font-size:9.8px;-webkit-text-stroke:0.05px currentColor;color:#9c9c9c">F8 Make Unique</div>
<div class="btn d" style="left:645.5px"></div>
<div class="t b" style="left:645.5px;width:118px;text-align:center;top:596.00px;font-size:9.8px;-webkit-text-stroke:0.05px currentColor;color:#9c9c9c">F11Repair Pointer</div>
<svg class="a" style="left:0px;top:20px" width="72" height="60" viewBox="0 20 72 60"><ellipse cx="33.8" cy="49.6" rx="31.6" ry="23.8" fill="none" stroke="#ff0000" stroke-width="3.8"/></svg>
</body></html>
